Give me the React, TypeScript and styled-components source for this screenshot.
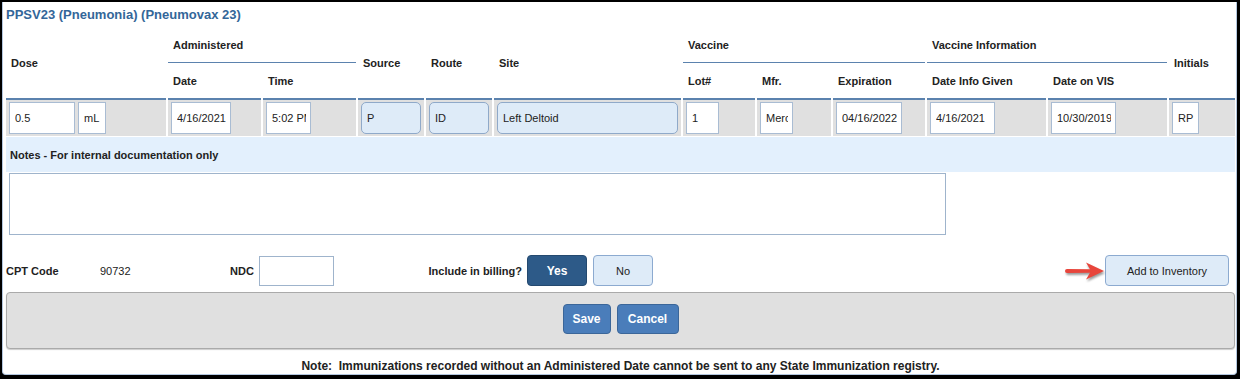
import styled, { createGlobalStyle } from "styled-components";

const GlobalStyle = createGlobalStyle`
  html, body {
    margin: 0;
    padding: 0;
    background: #000;
  }
  body {
    font-family: "Liberation Sans", Arial, sans-serif;
    color: #222;
  }
`;

const Frame = styled.div`
  width: 1240px;
  height: 379px;
  box-sizing: border-box;
  padding: 2px 3px 4px 2px;
`;

const Panel = styled.div`
  width: 1235px;
  height: 373px;
  box-sizing: border-box;
  background: #fff;
  border: 1px solid #b4c7df;
  border-top: 0;
  border-radius: 0 0 4px 4px;
  padding: 0 1px 0 3px;
  display: flex;
  flex-direction: column;
`;

const Title = styled.div`
  height: 25px;
  line-height: 25px;
  font-size: 13px;
  font-weight: bold;
  color: #336699;
`;

const FormGrid = styled.div`
  display: grid;
  grid-template-columns: 160px 93px 93px 66px 66px 187px 72px 74px 92px 119px 119px 66px;
  grid-template-rows: 36px 37px 36px;
  column-gap: 2px;
`;

const HeadCell = styled.div<{ $col: string; $row: string; $group?: boolean }>`
  grid-column: ${(p) => p.$col};
  grid-row: ${(p) => p.$row};
  display: flex;
  align-items: center;
  padding-left: 5px;
  box-sizing: border-box;
  font-size: 11px;
  font-weight: bold;
  color: #222;
  border-bottom: ${(p) => (p.$group ? "1px" : "2px")} solid #5b82ae;
`;

const DataCell = styled.div`
  grid-row: 3;
  display: flex;
  align-items: center;
  gap: 3px;
  padding: 0 3px;
  background: #e0e0e0;
`;

const Field = styled.input<{ $w: number; $tone?: "blue" }>`
  width: ${(p) => p.$w}px;
  height: 32px;
  box-sizing: border-box;
  margin: 0;
  padding: 0 4px 0 5px;
  font-family: inherit;
  font-size: 11px;
  color: #222;
  background: ${(p) => (p.$tone === "blue" ? "#deebf8" : "#fff")};
  border: 1px solid ${(p) => (p.$tone === "blue" ? "#8fa9c9" : "#a9bcd3")};
  border-radius: ${(p) => (p.$tone === "blue" ? "5px" : "0")};
  outline: none;
`;

const NotesBar = styled.div`
  margin-top: 1px;
  height: 35px;
  display: flex;
  align-items: center;
  padding-left: 4px;
  background: #e3f0fd;
  font-size: 11px;
  font-weight: bold;
`;

const NotesBox = styled.textarea`
  width: 937px;
  height: 62px;
  box-sizing: border-box;
  margin: 1px 0 0 3px;
  border: 1px solid #9fb4cc;
  resize: none;
  font-family: inherit;
  font-size: 11px;
  outline: none;
`;

const BillingRow = styled.div`
  margin-top: 20px;
  height: 31px;
  display: flex;
  align-items: center;
  font-size: 11px;
`;

const RowLabel = styled.span<{ $w: number; $right?: boolean; $plain?: boolean }>`
  width: ${(p) => p.$w}px;
  box-sizing: border-box;
  font-weight: ${(p) => (p.$plain ? "normal" : "bold")};
  text-align: ${(p) => (p.$right ? "right" : "left")};
  padding-right: ${(p) => (p.$right ? "5px" : "0")};
`;

const NdcInput = styled.input`
  width: 75px;
  height: 30px;
  box-sizing: border-box;
  margin: 0;
  border: 1px solid #9fb4cc;
  outline: none;
`;

const Spacer = styled.div<{ $w?: number }>`
  flex: ${(p) => (p.$w ? `0 0 ${p.$w}px` : "1")};
`;

const Button = styled.button<{ $variant: "dark" | "light" | "action"; $w: number; $ml?: number }>`
  width: ${(p) => p.$w}px;
  height: ${(p) => (p.$variant === "action" ? 30 : 31)}px;
  margin: 0 0 0 ${(p) => p.$ml ?? 0}px;
  padding: 0;
  box-sizing: border-box;
  font-family: inherit;
  font-size: ${(p) => (p.$variant === "light" ? 11 : 12)}px;
  font-weight: ${(p) => (p.$variant === "light" ? "normal" : "bold")};
  color: ${(p) => (p.$variant === "light" ? "#222" : "#fff")};
  background: ${(p) =>
    p.$variant === "dark" ? "#2d5a88" : p.$variant === "action" ? "#4a7dba" : "#deebf8"};
  border: 1px solid
    ${(p) =>
      p.$variant === "dark" ? "#24496f" : p.$variant === "action" ? "#3b6699" : "#8caad0"};
  border-radius: 4px;
`;

const Pointer = styled.svg`
  width: 42px;
  height: 20px;
  margin-top: 1px;
  filter: drop-shadow(1px 2px 1px rgba(0, 0, 0, 0.4));
`;

const ActionBar = styled.div`
  margin-top: 6px;
  height: 57px;
  box-sizing: border-box;
  padding-top: 11px;
  display: flex;
  justify-content: center;
  align-items: flex-start;
  gap: 6px;
  background: #e0e0e0;
  border: 1px solid #aaa;
  border-radius: 4px;
  box-shadow: 0 1px 1px rgba(0, 0, 0, 0.2);
`;

const Note = styled.div`
  margin-top: 10px;
  line-height: 15px;
  text-align: center;
  font-size: 12px;
  font-weight: bold;
  white-space: pre;
`;

const heads = [
  { label: "Dose", col: "1", row: "1 / 3" },
  { label: "Administered", col: "2 / 4", row: "1", group: true },
  { label: "Date", col: "2", row: "2" },
  { label: "Time", col: "3", row: "2" },
  { label: "Source", col: "4", row: "1 / 3" },
  { label: "Route", col: "5", row: "1 / 3" },
  { label: "Site", col: "6", row: "1 / 3" },
  { label: "Vaccine", col: "7 / 10", row: "1", group: true },
  { label: "Lot#", col: "7", row: "2" },
  { label: "Mfr.", col: "8", row: "2" },
  { label: "Expiration", col: "9", row: "2" },
  { label: "Vaccine Information", col: "10 / 12", row: "1", group: true },
  { label: "Date Info Given", col: "10", row: "2" },
  { label: "Date on VIS", col: "11", row: "2" },
  { label: "Initials", col: "12", row: "1 / 3" },
];

type Cell = { value: string; w: number; tone?: "blue" }[];

const cells: Cell[] = [
  [
    { value: "0.5", w: 66 },
    { value: "mL", w: 28 },
  ],
  [{ value: "4/16/2021", w: 60 }],
  [{ value: "5:02 PM", w: 45 }],
  [{ value: "P", w: 60, tone: "blue" }],
  [{ value: "ID", w: 60, tone: "blue" }],
  [{ value: "Left Deltoid", w: 182, tone: "blue" }],
  [{ value: "1", w: 33 }],
  [{ value: "Merck", w: 33 }],
  [{ value: "04/16/2022", w: 66 }],
  [{ value: "4/16/2021", w: 65 }],
  [{ value: "10/30/2019", w: 65 }],
  [{ value: "RP", w: 27 }],
];

const App = () => {
  return (
    <>
      <GlobalStyle />
      <Frame>
        <Panel>
          <Title>PPSV23 (Pneumonia) (Pneumovax 23)</Title>
          <FormGrid>
            {heads.map((h) => (
              <HeadCell key={h.label} $col={h.col} $row={h.row} $group={h.group}>
                {h.label}
              </HeadCell>
            ))}
            {cells.map((cell, i) => (
              <DataCell key={i}>
                {cell.map((f) => (
                  <Field key={f.value} $w={f.w} $tone={f.tone} defaultValue={f.value} />
                ))}
              </DataCell>
            ))}
          </FormGrid>
          <NotesBar>Notes - For internal documentation only</NotesBar>
          <NotesBox />
          <BillingRow>
            <RowLabel $w={94}>CPT Code</RowLabel>
            <RowLabel $w={130} $plain>
              90732
            </RowLabel>
            <RowLabel $w={29}>NDC</RowLabel>
            <NdcInput />
            <RowLabel $w={193} $right>
              Include in billing?
            </RowLabel>
            <Button $variant="dark" $w={60}>
              Yes
            </Button>
            <Button $variant="light" $w={60} $ml={6}>
              No
            </Button>
            <Spacer />
            {/* red call-out arrow */}
            <Pointer viewBox="0 0 42 20">
              <path d="M2 10 Q2 8 4 7.9 L28 8.2 L28 11.8 L4 12.1 Q2 12 2 10 Z" fill="#e8453b" />
              <path d="M23 1.5 L41 10 L23 18.5 L28 10 Z" fill="#e8453b" />
            </Pointer>
            <Button $variant="light" $w={124}>
              Add to Inventory
            </Button>
            <Spacer $w={6} />
          </BillingRow>
          <ActionBar>
            <Button $variant="action" $w={48}>
              Save
            </Button>
            <Button $variant="action" $w={62}>
              Cancel
            </Button>
          </ActionBar>
          <Note>Note:  Immunizations recorded without an Administered Date cannot be sent to any State Immunization registry.</Note>
        </Panel>
      </Frame>
    </>
  );
};

export default App;
